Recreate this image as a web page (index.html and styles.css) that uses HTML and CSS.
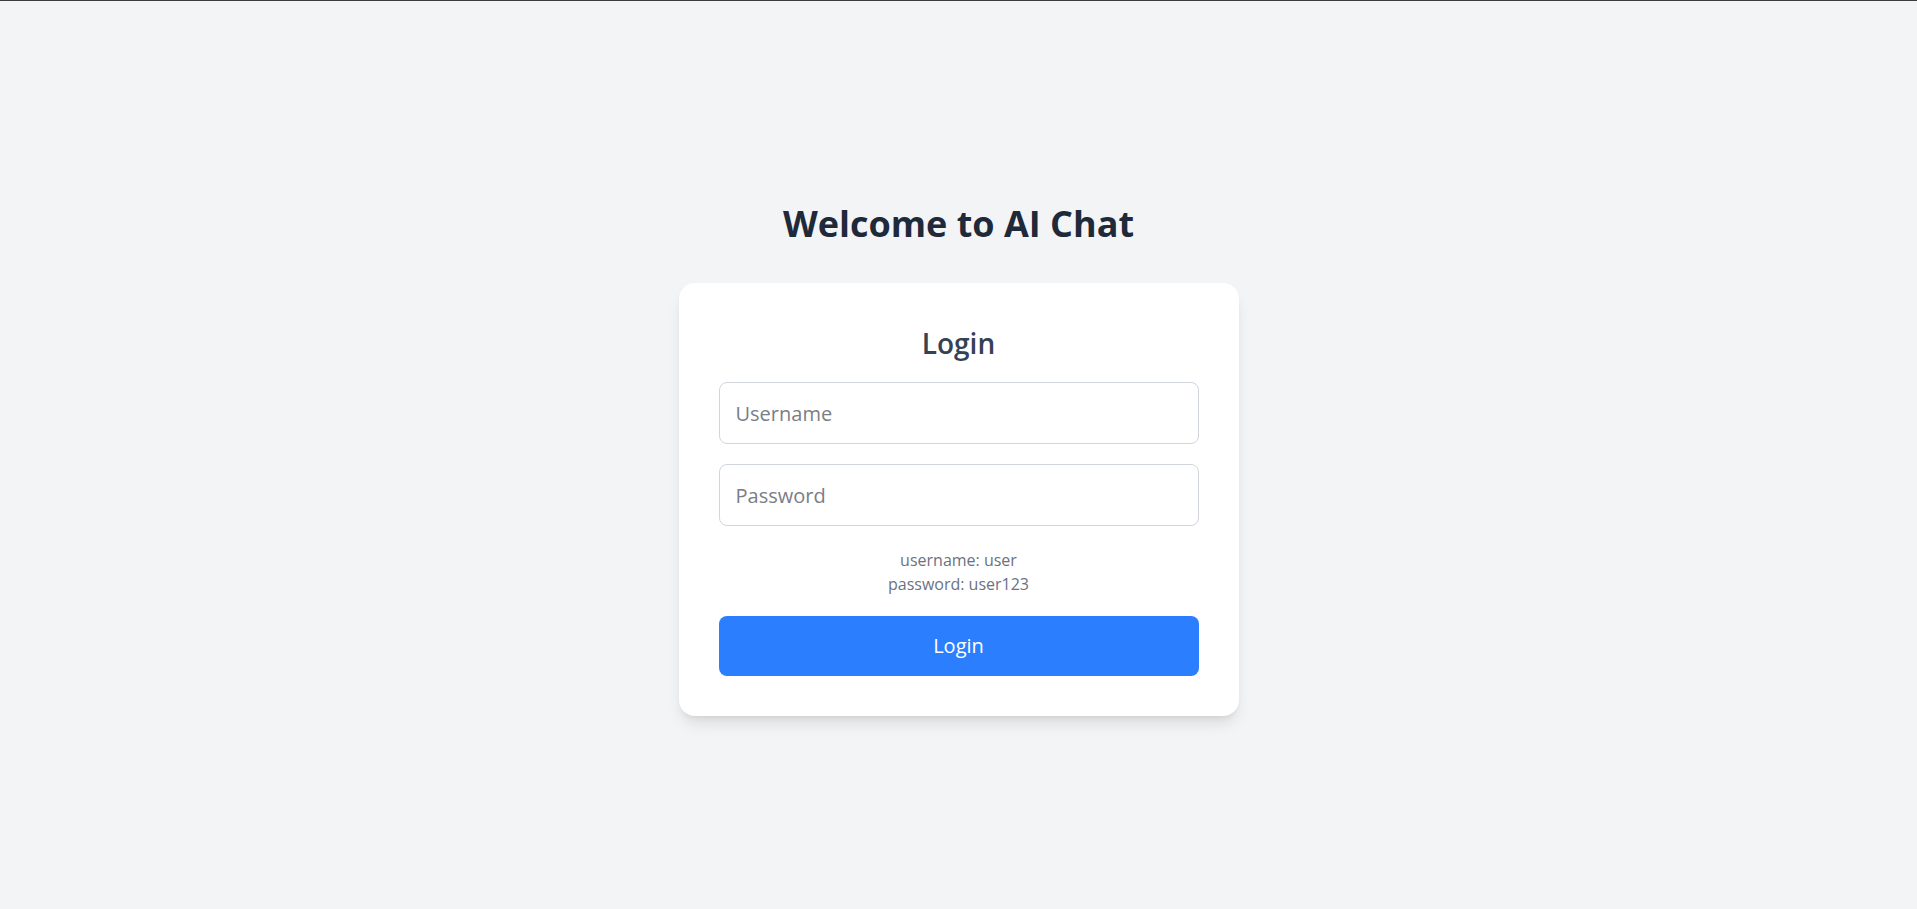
FILE: index.html
```html
<!DOCTYPE html>
<html lang="en">
<head>
<meta charset="utf-8">
<title>AI Chat - Login</title>
<link rel="stylesheet" href="styles.css">
</head>
<body>
<main class="page">
  <h1 class="title">Welcome to AI Chat</h1>
  <section class="card">
    <h2 class="card-title">Login</h2>
    <form class="form">
      <input class="field" type="text" placeholder="Username">
      <input class="field" type="password" placeholder="Password">
      <div class="hint">
        <div>username: user</div>
        <div>password: user123</div>
      </div>
      <button class="btn" type="button">Login</button>
    </form>
  </section>
</main>
</body>
</html>
```

FILE: styles.css
```css
* { box-sizing: border-box; }

html, body {
  margin: 0;
  padding: 0;
}

body {
  background: #f3f4f6;
  border-top: 1px solid #3c3c3c;
  font-family: "Open Sans", "Noto Sans", sans-serif;
}

.page {
  min-height: calc(100vh - 1px);
  display: flex;
  flex-direction: column;
  align-items: center;
  justify-content: center;
}

.title {
  margin: 0 0 35px;
  padding-top: 6px;
  font-size: 36px;
  line-height: 48px;
  font-weight: 700;
  color: #1e2939;
  text-align: center;
}

.card {
  width: 560px;
  background: #ffffff;
  border-radius: 16px;
  padding: 40px;
  box-shadow: 0 10px 15px -3px rgba(0, 0, 0, 0.1), 0 4px 6px -4px rgba(0, 0, 0, 0.1);
}

.card-title {
  margin: 0 0 21px;
  padding-top: 2px;
  font-size: 28px;
  line-height: 36px;
  font-weight: 600;
  color: #364153;
  text-align: center;
}

.form {
  display: flex;
  flex-direction: column;
  gap: 20px;
}

.field {
  width: 100%;
  height: 62px;
  padding: 16px;
  border: 1px solid #d1d5dc;
  border-radius: 8px;
  font-family: inherit;
  font-size: 20px;
  line-height: 28px;
  color: #1e2939;
  background: #ffffff;
  outline: none;
}

.field::placeholder {
  color: #7a7e85;
}

.hint {
  margin-top: 2px;
  font-size: 16px;
  line-height: 24px;
  color: #6a7282;
  text-align: center;
}

.btn {
  height: 60px;
  padding: 16px;
  border: none;
  border-radius: 8px;
  background: #2b7fff;
  color: #ffffff;
  font-family: inherit;
  font-size: 20px;
  line-height: 28px;
  cursor: pointer;
}
```
